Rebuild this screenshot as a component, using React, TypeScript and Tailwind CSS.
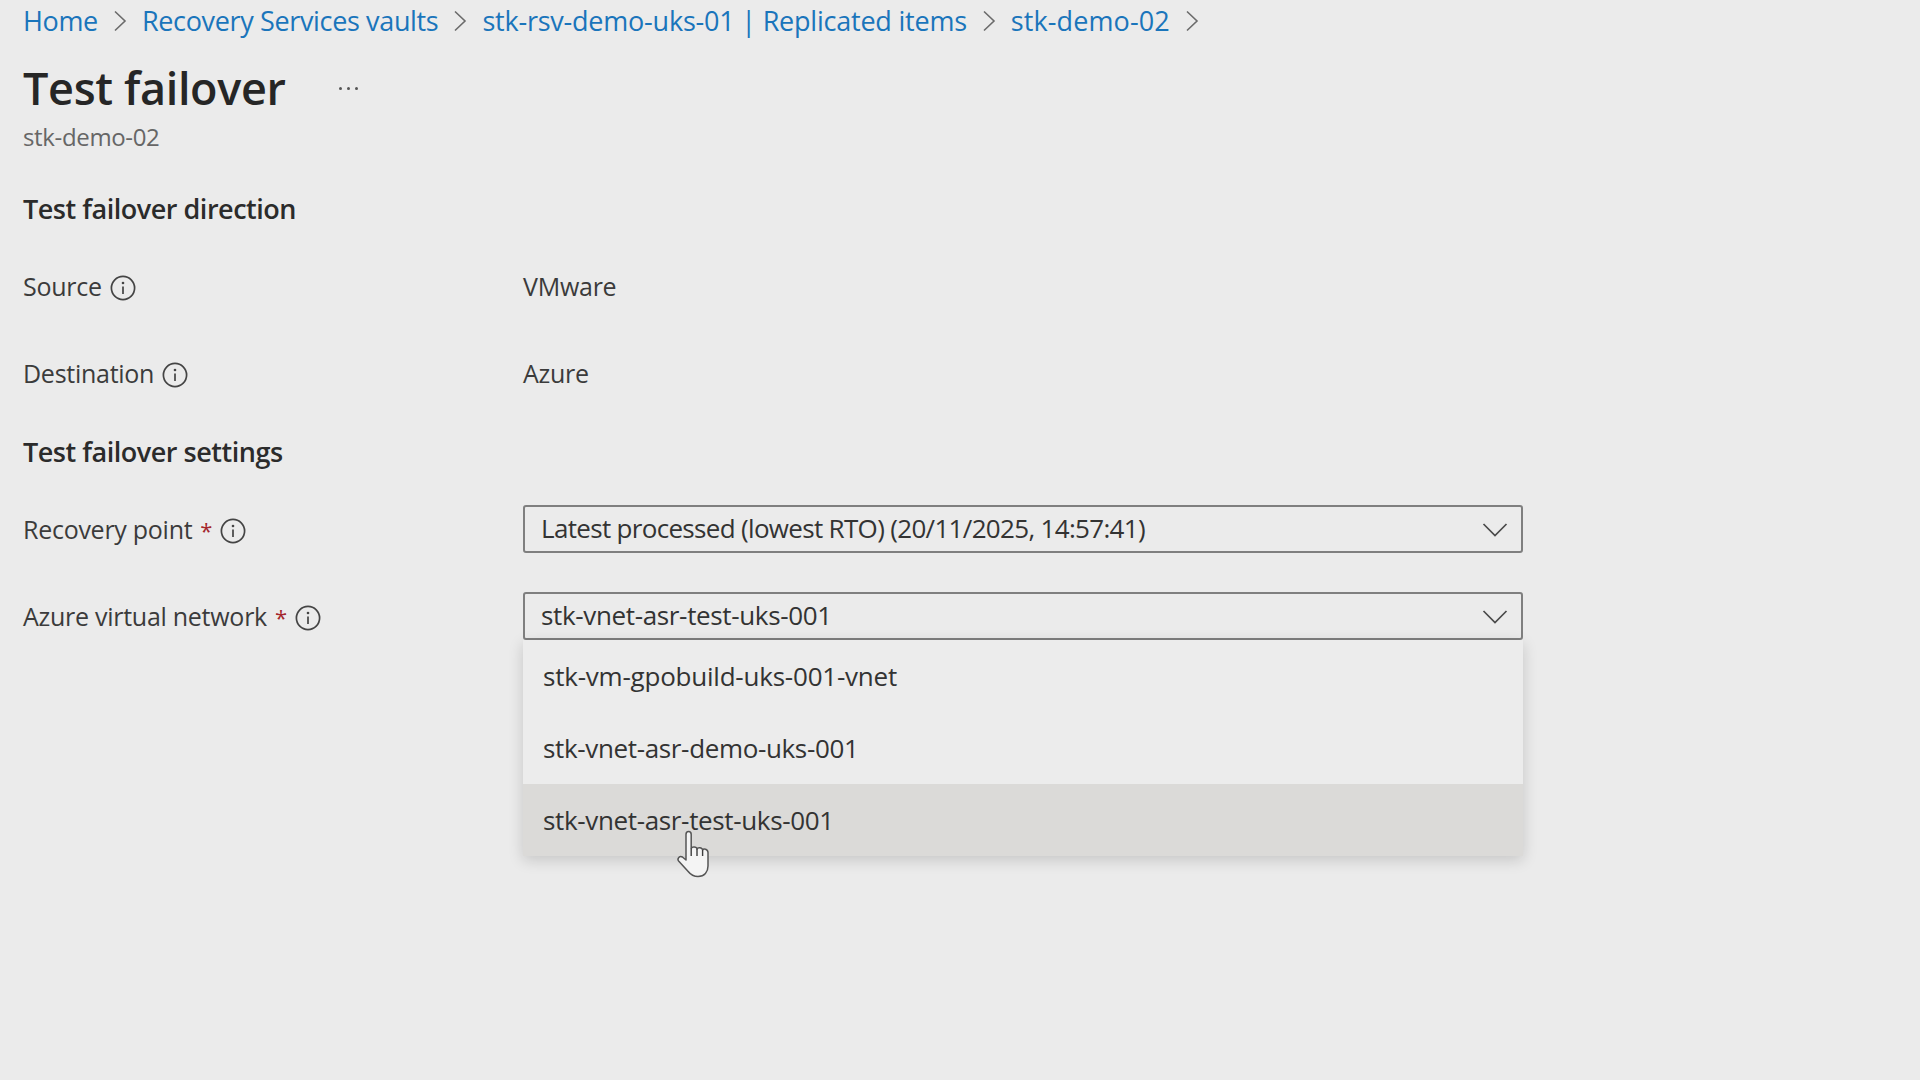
import React from "react";

const font = { fontFamily: '"Open Sans", "Noto Sans", sans-serif' };

function Chevron() {
  return (
    <svg width="16" height="26" viewBox="0 0 16 26" fill="none" className="shrink-0">
      <path d="M3 3.5 L13 13 L3 22.5" stroke="#6b6b6b" strokeWidth="1.6" />
    </svg>
  );
}

function Info() {
  return (
    <svg width="26" height="26" viewBox="0 0 26 26" fill="none" className="shrink-0 mt-[2px]">
      <circle cx="13" cy="13" r="11.6" stroke="#444" strokeWidth="1.7" />
      <circle cx="13" cy="8" r="1.3" fill="#444" />
      <path d="M13 11.5V19" stroke="#444" strokeWidth="1.7" />
    </svg>
  );
}

function Down() {
  return (
    <svg width="26" height="16" viewBox="0 0 26 16" fill="none" className="mt-[2px]">
      <path d="M1.5 2 L13 13.5 L24.5 2" stroke="#4a4a4a" strokeWidth="1.7" />
    </svg>
  );
}

function Hand() {
  return (
    <svg width="40" height="50" viewBox="0 0 40 50" fill="none" className="absolute left-[675px] top-[829px]">
      <path
        d="M11 27V5.5C11 3.5 12.2 2.5 13.6 2.5C15 2.5 16.2 3.5 16.2 5.5V19.5C16.6 17.5 21.6 17.5 22 20C22.6 18 27.2 18.2 27.6 21C28.4 19.4 32.8 19.8 33 23.5V37C33 43 29.5 47.5 23 47.5C18.5 47.5 15.8 45.8 13.2 42.5L3.6 32C1.8 29.8 4.6 26.2 7.4 28L11 31Z"
        fill="#f4f4f4"
        stroke="#555555"
        strokeWidth="1.5"
        strokeLinejoin="round"
      />
      <path d="M16.2 19.5V27M22 20V27M27.6 21V27" stroke="#3d3d3d" strokeWidth="1.4" />
    </svg>
  );
}

function Row({ label, required, value, h }: { label: string; required?: boolean; value?: string; h: string }) {
  return (
    <div className={`flex items-center ${h}`}>
      <div className="w-[500px] shrink-0 flex items-center gap-[8px] text-[25px] text-[#3b3b3b] tracking-[-0.27px]">
        <span>
          {label}
          {required && <span className="ml-[8px] text-[22px] text-[#a4262c]">*</span>}
        </span>
        <Info />
      </div>
      {value && <div className="text-[25px] text-[#3b3b3b] tracking-[-0.25px]">{value}</div>}
    </div>
  );
}

function Select({ text, tight }: { text: string; tight?: boolean }) {
  return (
    <div className="w-[1000px] h-[48px] shrink-0 border-2 border-[#7f7f7f] rounded-[3px] flex items-center justify-between pl-[16px] pr-[13px] text-[26px] text-[#333]">
      <span className={tight ? "tracking-[-0.68px] mb-[1px]" : "mb-[1px]"}>{text}</span>
      <Down />
    </div>
  );
}

export default function App() {
  const items = ["stk-vm-gpobuild-uks-001-vnet", "stk-vnet-asr-demo-uks-001", "stk-vnet-asr-test-uks-001"];
  return (
    <div className="relative w-[1920px] h-[1080px] overflow-hidden bg-[#ebebeb] pl-[23px] tracking-[-0.35px]" style={font}>
      <div className="flex items-center h-[42px] text-[27px] text-[#1a75bb]">
        <span>Home</span>
        <span className="mx-[14px]"><Chevron /></span>
        <span>Recovery Services vaults</span>
        <span className="mx-[14px]"><Chevron /></span>
        <span className="tracking-[-0.22px]">stk-rsv-demo-uks-01 | Replicated items</span>
        <span className="mx-[14px]"><Chevron /></span>
        <span className="tracking-[0.1px]">stk-demo-02</span>
        <span className="mx-[14px]"><Chevron /></span>
      </div>
      <div className="flex items-center h-[74px] mt-[8px]">
        <h1 className="text-[45px] leading-none font-semibold text-[#262626]">Test failover</h1>
        <div className="ml-[53px] flex gap-[5px] mt-[2px]">
          <span className="w-[3px] h-[3px] rounded-full bg-[#555]" />
          <span className="w-[3px] h-[3px] rounded-full bg-[#555]" />
          <span className="w-[3px] h-[3px] rounded-full bg-[#555]" />
        </div>
      </div>
      <div className="h-[26px] flex items-center text-[24px] text-[#666]">stk-demo-02</div>
      <div className="h-[36px] mt-[41px] flex items-center text-[27px] font-semibold text-[#2b2b2b] tracking-[-0.48px]">Test failover direction</div>
      <Row label="Source" value="VMware" h="h-[87px] mt-[16px]" />
      <Row label="Destination" value="Azure" h="h-[87px]" />
      <div className="h-[69px] pt-[2px] flex items-center text-[27px] font-semibold text-[#2b2b2b] tracking-[-0.48px]">Test failover settings</div>
      <div className="flex items-center h-[48px] mt-[19px]">
        <div className="w-[500px] shrink-0 pt-[1px]"><Row label="Recovery point" required h="h-[47px]" /></div>
        <Select text="Latest processed (lowest RTO) (20/11/2025, 14:57:41)" tight />
      </div>
      <div className="flex items-center h-[48px] mt-[39px]">
        <div className="w-[500px] shrink-0 pt-[1px]"><Row label="Azure virtual network" required h="h-[47px]" /></div>
        <Select text="stk-vnet-asr-test-uks-001" />
      </div>
      <div className="absolute left-[523px] top-[640px] w-[1000px] bg-[#ececec] shadow-[0_4px_14px_rgba(0,0,0,0.16)]">
        {items.map((t, i) => (
          <div key={t} className={`h-[72px] flex items-center pl-[20px] text-[26px] text-[#333] ${i === 2 ? "bg-[#dbdad8]" : ""}`}>
            <span className={i === 0 ? "tracking-[-0.22px]" : ""}>{t}</span>
          </div>
        ))}
      </div>
      <Hand />
    </div>
  );
}
